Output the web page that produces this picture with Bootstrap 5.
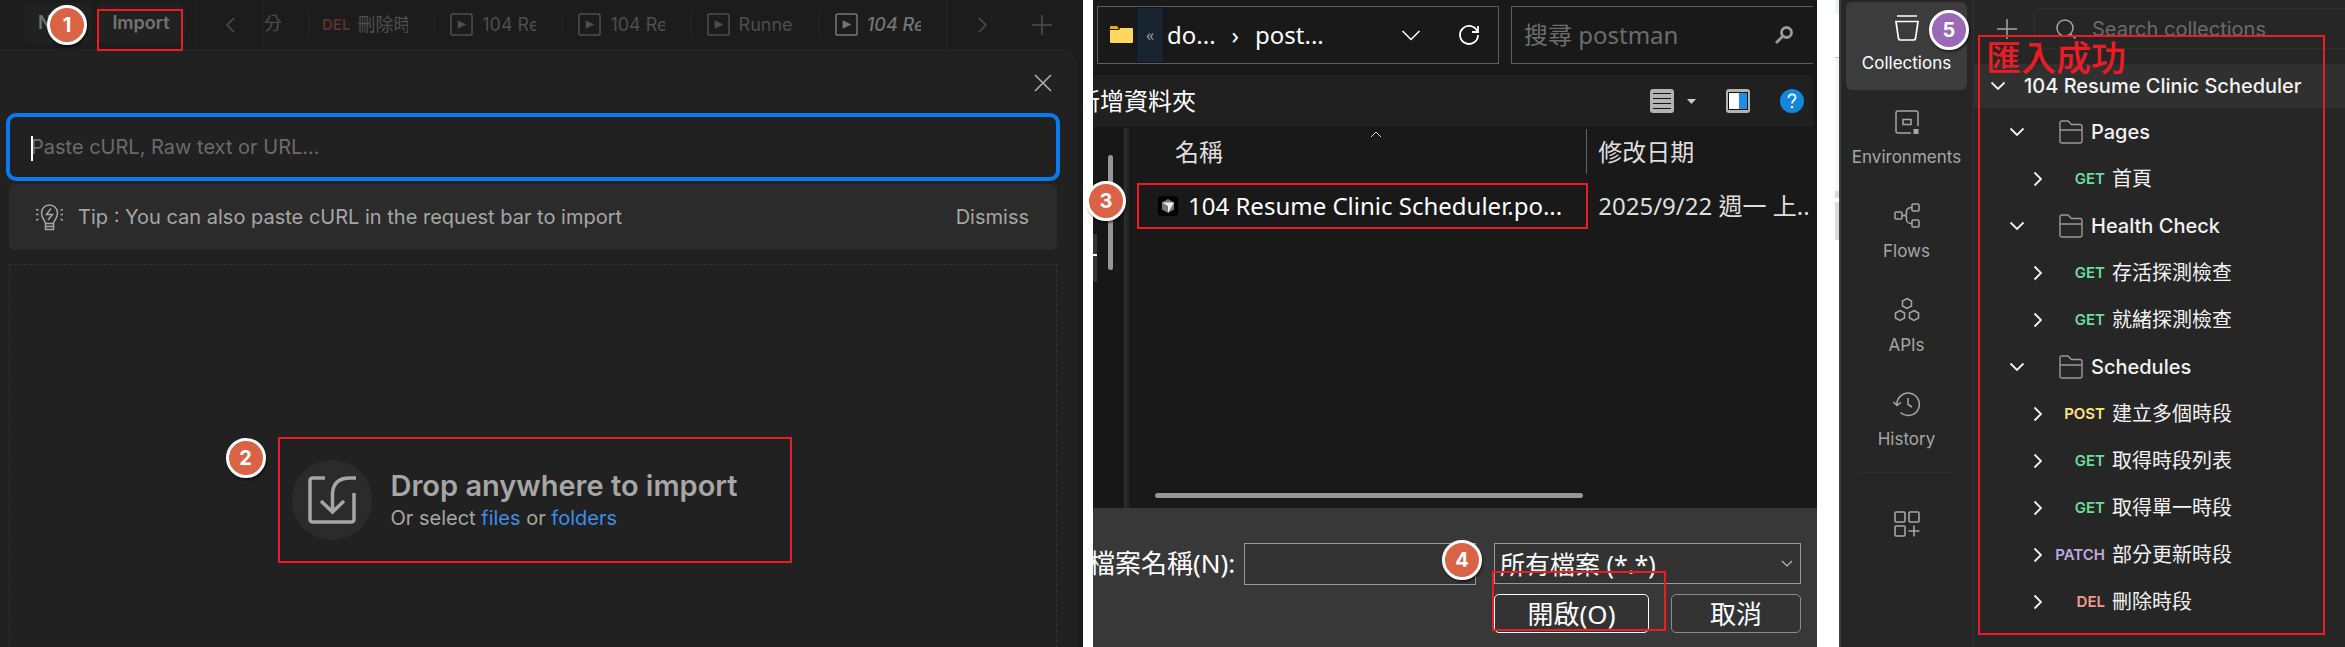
<!DOCTYPE html>
<html lang="zh-Hant">
<head>
<meta charset="utf-8">
<meta name="viewport" content="width=device-width, initial-scale=1">
<title>Import a collection</title>
<link href="https://cdn.jsdelivr.net/npm/bootstrap@5.3.0/dist/css/bootstrap.min.css" rel="stylesheet">
<style>
  body { font-family: Inter, "Noto Sans CJK TC", sans-serif; background: #fff; font-size: 20px; line-height: 28px; }
  svg { display: block; flex: none; fill: none; stroke: currentColor; }
  svg.flat { stroke: none; }
  button, input, select { font: inherit; color: inherit; }
  button { background: none; border: 0; padding: 0; }
  .stage { min-height: 100vh; display: grid; grid-template-columns: minmax(0, 1083fr) 10px minmax(0, 724fr) 22px minmax(0, 506fr); }

  /* step markers and highlight frames */
  .step { position: absolute; z-index: 5; width: 40px; height: 40px; border: 3px solid #fff; border-radius: 50%; background: #d96344; color: #fff; font-family: Inter, sans-serif; font-size: 20px; font-weight: 700; line-height: 34px; text-align: center; box-shadow: 1px 2px 2px rgba(0,0,0,.5); }
  .step.done { background: #9a69b9; }
  .frame { position: absolute; z-index: 4; border: 2px solid #ed1c24; pointer-events: none; }

  /* import dialog */
  .importer { background: #1c1c1c; color: #a6a6a6; }
  .topbar { height: 49px; color: #4e4e4e; font-size: 18px; }
  .topbar > * { flex: none; }
  .pill { height: 40px; margin-top: 3px; border-radius: 6px; background: #212121; color: #737373; font-weight: 600; }
  .pill.new { width: 68px; margin-left: 24px; text-align: left; padding-left: 14px; }
  .pill.imp { width: 88px; margin-left: 5px; }
  .back { width: 68px; margin-left: 11px; border-left: 1px solid #242424; border-right: 1px solid #242424; }
  .topbar .tabs { flex: 1 1 0; min-width: 0; border-right: 1px solid #262626; }
  .clipped { width: 44px; padding-top: 10px; flex: none; }
  .clipped span { width: 18px; }
  .clipped i { font-style: normal; margin-left: -18px; }
  .tab { flex: 1 1 0; min-width: 0; height: 49px; padding: 0 26px 0 16px; gap: 9px; position: relative; }
  .tab.request { padding-left: 14px; gap: 7px; }
  .tab::before { content: ""; position: absolute; left: 0; top: 11px; height: 27px; width: 1px; background: #262626; }
  .tab span { overflow: hidden; white-space: nowrap; }
  .tab b { color: #5a332c; font-weight: 600; font-size: 15px; }
  .tab.current { color: #757575; font-weight: 500; font-style: italic; }
  .tabs-end { width: 135px; padding: 0 31px 0 30px; }
  .dialog { background: #212121; border-top-right-radius: 14px; margin-right: 6px; padding: 25px 20px 0 9px; }
  .closer { margin: 0 5px 0 auto; color: #b0b0b0; }
  .curl { margin: 21px -3px 0; height: 68px; border: 4px solid #097bed; border-radius: 10px; background: #212121; padding: 0 21px; width: calc(100% + 6px); color: #fff; }
  .curl::placeholder { color: #6b6b6b; opacity: 1; }
  .caret { position: absolute; left: 22px; top: 44px; width: 2px; height: 25px; background: #fff; }
  .tip { margin-top: 3px; height: 66px; border-radius: 6px; background: #2b2b2b; padding: 0 28px 0 27px; gap: 15px; }
  .drop { margin-top: 14px; border: 1px dashed #333; border-bottom: 0; padding: 87px 0 0 3px; }
  .drop-inner { position: relative; width: 514px; height: 126px; padding-left: 14px; gap: 19px; }
  .drop-icon { width: 80px; height: 80px; border-radius: 50%; background: #2b2b2b; }
  .drop h1 { font-size: 29px; line-height: 36px; font-weight: 600; margin: 0; }
  .drop a { color: #3b8eea; text-decoration: none; }

  /* file picker */
  .picker { background: #191919; color: #fff; font-family: "Noto Sans", "Noto Sans CJK TC", sans-serif; font-size: 24px; line-height: 32px; }
  .paths { padding: 6px 4px 11px; gap: 12px; display: grid; grid-template-columns: 402fr 302fr; }
  .address { height: 58px; border: 1px solid #5c5c5c; padding: 0 18px 0 12px; }
  .crumbs { width: 28px; height: 56px; background: #182530; border: 1px solid #0d161e; color: #999; font-size: 16px; margin: 0 3px; }
  .refresh { margin-left: 38px; }
  .finder { height: 58px; border: 1px solid #5c5c5c; border-right: 0; padding: 0 20px 0 12px; }
  .finder input { background: none; border: 0; padding: 0; min-width: 0; width: 100%; }
  .finder input::placeholder { color: #6d6d6d; opacity: 1; }
  .finder svg { color: #999; }
  .tools { height: 53px; margin-right: 4px; background: #202020; border-bottom: 1px solid #161616; padding-right: 9px; gap: 30px; }
  .tools .views { gap: 13px; }
  .tools .cut { margin-left: -17px; }
  .side { width: 31px; flex: none; background: #171717; position: relative; }
  .thumb { position: absolute; left: 15px; top: 27px; width: 5px; height: 115px; border-radius: 3px; background: #969696; }
  .stub { position: absolute; left: 0; top: 106px; width: 4px; height: 48px; background: #333; }
  .stub::after { content: ""; display: block; margin-top: 20px; height: 2px; background: #fff; }
  .split { width: 5px; flex: none; background: #252525; border-left: 2px solid #2e2e2e; }
  .listing { min-width: 0; }
  .files { table-layout: fixed; width: 100%; }
  .files th { font-weight: 400; color: #dedede; height: 47px; padding: 0 0 0 11px; position: relative; white-space: nowrap; }
  .files th:first-child { padding-left: 46px; width: 67%; }
  .files th:first-child::after { content: ""; position: absolute; right: 0; top: 1px; height: 45px; width: 1px; background: #5f5f5f; }
  .files td { height: 62px; padding: 0 0 0 11px; position: relative; white-space: nowrap; color: #dedede; }
  .files td:first-child { padding-left: 29px; color: #fff; }
  .files td div { gap: 10px; }
  .sort { position: absolute; left: 241px; top: 3px; }
  .slide { height: 15px; padding-left: 26px; }
  .slide div { height: 5px; width: 65%; border-radius: 3px; background: #969696; }
  .confirm { background: #383838; height: 139px; font-size: 26px; padding: 35px 16px 0 0; gap: 18px; }
  .confirm label { width: 151px; flex: none; white-space: nowrap; overflow: hidden; }
  .confirm .cut { margin-left: -4px; }
  .fname { height: 42px; min-width: 0; border: 1px solid #999; background: #333; padding: 0 8px; width: 100%; }
  .kinds { width: 307px; flex: none; }
  .kinds select { appearance: none; width: 100%; height: 41px; border: 1px solid #999; border-radius: 0; background: #333; padding: 0 5px; font-size: 25px; }
  .kinds .arrow { position: absolute; right: 8px; top: 17px; color: #bbb; }
  .act { height: 39px; margin-top: 10px; border: 1px solid #8c8c8c; border-radius: 5px; background: #333; line-height: 36px; }
  .act.open { width: 155px; border-color: #fff; }
  .act.cancel { width: 130px; }

  /* collections sidebar */
  .edge { padding-left: 18px; }
  .edge div { height: 240px; background: linear-gradient(#eef1f5 0 14px, #fff 14px 57px, #c4c4c4 57px 58px, #f7f7f8 58px 191px, #d6dce6 191px 198px, #fff 198px 202px, #dadbe2 202px 240px); }
  .collections { background: #262626; color: #f2f2f2; border-left: 2px solid #3d3d3d; }
  .rail { width: 133px; flex: none; border-right: 1px solid #333; padding: 2px 6px 0 5px; color: #a6a6a6; font-size: 17px; }
  .rail a { height: 88px; flex: none; margin-bottom: 6px; border-radius: 6px; color: inherit; text-decoration: none; padding-top: 13px; gap: 10px; line-height: 24px; }
  .rail a.active { background: #3c3c3c; color: #fff; }
  .rail hr { margin: 0 14px 38px 13px; border-color: #4a4a4a; }
  .query { height: 64px; padding: 8px 0 15px 23px; gap: 17px; color: #a6a6a6; }
  .query .box { border: 1px solid #303030; border-right: 0; border-radius: 5px 0 0 5px; padding-left: 21px; gap: 16px; height: 41px; }
  .query input { background: none; border: 0; padding: 0; width: 100%; min-width: 0; }
  .query input::placeholder { color: #6b6b6b; opacity: 1; }
  .tree { font-weight: 500; }
  .tree li { height: 47px; }
  .tree li.root { height: 44px; background: #303030; padding-left: 16px; gap: 18px; }
  .tree li.group { padding-left: 35px; }
  .tree .dir { margin: 0 8px 0 34px; color: #999; }
  .tree li.call { padding-left: 56px; font-weight: 400; }
  .verb { width: 59px; text-align: right; font-size: 15px; font-weight: 600; margin-right: 7px; flex: none; }
  .get { color: #6bdd9a; } .post { color: #ffe47e; } .patch { color: #c0a8e1; } .del { color: #f79a8e; }
  .notice { position: absolute; z-index: 4; left: 12px; top: 38px; color: #ed1c24; font-size: 35px; line-height: 40px; font-weight: 500; white-space: nowrap; }
</style>
</head>
<body>
<svg width="0" height="0" class="position-absolute" aria-hidden="true">
  <defs>
    <symbol id="play" viewBox="0 0 24 24"><rect x="1" y="1" width="22" height="22" rx="2" stroke-width="1.6"/><path d="M8 7.500l9 4.500-9 4.500z" fill="currentColor" stroke="none"/></symbol>
    <symbol id="down" viewBox="0 0 16 16"><path d="M1.500 4.500L8 11l6.500-6.500" stroke-width="1.800"/></symbol>
    <symbol id="right" viewBox="0 0 16 16"><path d="M4.500 1.500L11 8l-6.500 6.500" stroke-width="1.800"/></symbol>
    <symbol id="plus" viewBox="0 0 20 20"><path d="M10 0v20M0 10h20" stroke-width="1.500"/></symbol>
    <symbol id="folder" viewBox="0 0 24 24"><path d="M1 3q0-2 2-2h6l3.500 3.500H21q2 0 2 2V21q0 2-2 2H3q-2 0-2-2zM1 10h22" stroke-width="1.400"/></symbol>
  </defs>
</svg>
<main class="stage overflow-hidden">

  <section class="importer d-flex flex-column overflow-hidden" aria-label="Import">
    <div class="topbar d-flex position-relative">
      <button class="pill new" type="button">New</button>
      <span class="step" style="left:47px;top:5px">1</span>
      <div class="position-relative">
        <button class="pill imp" type="button">Import</button>
        <span class="frame" style="left:5px;top:9px;width:86px;height:42px"></span>
      </div>
      <button class="back d-flex align-items-center justify-content-center" type="button" aria-label="Back"><svg width="9" height="16" viewBox="0 0 9 16"><path d="M8 1L1 8l7 7" stroke-width="1.500"/></svg></button>
      <div class="tabs d-flex">
        <div class="clipped"><span class="d-block overflow-hidden text-nowrap"><i>部分</i></span></div>
        <div class="tab request d-flex align-items-center"><b>DEL</b><span>刪除時段</span></div>
        <div class="tab d-flex align-items-center"><svg width="23" height="23"><use href="#play"/></svg><span>104 Resume</span></div>
        <div class="tab d-flex align-items-center"><svg width="23" height="23"><use href="#play"/></svg><span>104 Resume</span></div>
        <div class="tab d-flex align-items-center"><svg width="23" height="23"><use href="#play"/></svg><span>Runner</span></div>
        <div class="tab current d-flex align-items-center"><svg width="23" height="23"><use href="#play"/></svg><span>104 Resume</span></div>
      </div>
      <div class="tabs-end d-flex align-items-center justify-content-between">
        <svg width="9" height="16" viewBox="0 0 9 16"><path d="M1 1l7 7-7 7" stroke-width="1.500"/></svg>
        <svg width="20" height="20"><use href="#plus"/></svg>
      </div>
    </div>
    <div class="dialog flex-fill d-flex flex-column">
      <button class="closer" type="button" aria-label="Close"><svg width="18" height="18" viewBox="0 0 18 18"><path d="M1 1l16 16M17 1L1 17" stroke-width="1.600"/></svg></button>
      <div class="position-relative">
        <input class="curl" type="text" placeholder="Paste cURL, Raw text or URL..." aria-label="Paste cURL, Raw text or URL">
        <span class="caret"></span>
      </div>
      <div class="tip d-flex align-items-center">
        <svg width="27" height="28" viewBox="0 0 27 28" stroke-width="1.500"><path d="M9.500 20.500c0-3-4-4.500-4-10.500a8 8 0 0116 0c0 6-4 7.500-4 10.500zM9.500 20.500v6h8v-6M9.500 23.500h8"/><path d="M15 5.500l-4.500 6h6L12 17M0 6.500l2.500.800M0 11.500h2.500M0 17l2.500-.800M27 6.500l-2.500.800M27 11.500h-2.500M27 17l-2.500-.800"/></svg>
        <span>Tip : You can also paste cURL in the request bar to import</span>
        <button class="ms-auto" type="button">Dismiss</button>
      </div>
      <div class="drop flex-fill d-flex flex-column align-items-center justify-content-center">
        <div class="drop-inner d-flex align-items-center">
          <span class="frame" style="inset:0"></span>
          <span class="step" style="left:-52px;top:1px">2</span>
          <div class="drop-icon d-flex align-items-center justify-content-center"><svg width="48" height="48" viewBox="0 0 48 48" stroke-width="3.500"><path d="M17 2H5q-3 0-3 3v38q0 3 3 3h38q3 0 3-3V17" stroke-linejoin="round"/><path d="M48 2h-6Q25 2 24.500 18v17M13 25l11.500 11L36 25"/></svg></div>
          <div>
            <h1>Drop anywhere to import</h1>
            <div>Or select <a href="#">files</a> or <a href="#">folders</a></div>
          </div>
        </div>
      </div>
    </div>
  </section>

  <div></div>

  <section class="picker d-flex flex-column position-relative" aria-label="File picker">
    <div class="paths">
      <div class="address d-flex align-items-center">
        <svg class="flat" width="23" height="18" viewBox="0 0 23 18"><path d="M0 1q0-1 1-1h6l2 3H0z" fill="#f9a602"/><path d="M0 4h9l1.500-2H22q1 0 1 1v13q0 1-1 1H1q-1 0-1-1z" fill="#ffd75e"/></svg>
        <button class="crumbs" type="button">«</button>
        <span>do...</span><span class="mx-3">›</span><span>post...</span>
        <svg class="ms-auto" width="18" height="18" viewBox="0 0 16 16"><path d="M.500 4.500L8 12l7.500-7.500" stroke-width="1.300"/></svg>
        <svg class="refresh" width="22" height="22" viewBox="0 0 22 22" stroke-width="1.800"><path d="M19.500 8A9 9 0 1020 11M20 2v6h-6"/></svg>
      </div>
      <div class="finder d-flex align-items-center">
        <input type="text" placeholder="搜尋 postman" aria-label="搜尋 postman">
        <svg width="18" height="18" viewBox="0 0 18 18" stroke-width="2.800"><circle cx="11.500" cy="6.500" r="5"/><path d="M8 10l-7 7"/></svg>
      </div>
    </div>
    <div class="tools d-flex align-items-center">
      <div class="overflow-hidden me-auto"><span class="cut d-inline-block">新增資料夾</span></div>
      <div class="views d-flex align-items-center">
        <svg class="flat" width="24" height="24" viewBox="0 0 24 24"><rect width="24" height="24" rx="3" fill="#b3b3b3"/><path d="M3 4.500h18M3 9.500h18M3 14.500h18M3 19.500h18" stroke="#111"/></svg>
        <svg class="flat" width="9" height="5" viewBox="0 0 9 5"><path d="M0 0h9L4.500 5z" fill="#ccc"/></svg>
      </div>
      <svg class="flat" width="24" height="24" viewBox="0 0 24 24"><rect width="24" height="24" rx="3" fill="#b3b3b3"/><rect x="2.500" y="3.500" width="19" height="17" fill="#fff" stroke="#111"/><path d="M13 4h8v16h-8z" fill="#1a8fe3"/></svg>
      <svg class="flat" width="24" height="24" viewBox="0 0 24 24"><circle cx="12" cy="12" r="12" fill="#1188dd"/><path d="M8.500 9c0-5 7-4.500 7-.500 0 3-3.500 3-3.500 6" fill="none" stroke="#fff" stroke-width="1.800"/><circle cx="12" cy="18" r="1.300" fill="#fff"/></svg>
    </div>
    <div class="d-flex flex-fill">
      <div class="side">
        <span class="thumb"></span><span class="stub"></span>
        <span class="step" style="left:-7px;top:53px">3</span>
      </div>
      <div class="split"></div>
      <div class="listing flex-fill d-flex flex-column pe-1">
        <table class="files">
          <thead><tr>
            <th scope="col">名稱<svg class="sort" width="12" height="7" viewBox="0 0 12 7"><path d="M1 6l5-5 5 5"/></svg></th>
            <th scope="col">修改日期</th>
          </tr></thead>
          <tbody><tr>
            <td><span class="frame" style="left:8px;top:8px;right:-1px;height:46px"></span>
              <div class="d-flex align-items-center"><svg class="flat" width="20" height="20" viewBox="0 0 20 20"><rect width="20" height="20" rx="4" fill="#000"/><path d="M10 3l6 3.500v7L10 17l-6-3.500v-7z" fill="#777"/><path d="M4 6.500h12L10 17v-7z" fill="#eee"/></svg><span>104 Resume Clinic Scheduler.po...</span></div></td>
            <td>2025/9/22 週一 上..</td>
          </tr></tbody>
        </table>
        <div class="slide mt-auto"><div></div></div>
      </div>
    </div>
    <div class="confirm d-flex">
      <div class="d-flex flex-fill align-items-start position-relative">
        <label for="fname"><span class="cut d-inline-block mt-1">檔案名稱(N):</span></label>
        <input class="fname" id="fname" type="text">
        <span class="step" style="right:-6px;top:-3px">4</span>
      </div>
      <div class="kinds position-relative">
        <select aria-label="檔案類型"><option>所有檔案 (*.*)</option></select>
        <svg class="arrow" width="12" height="8" viewBox="0 0 12 8"><path d="M1 1l5 5 5-5" stroke-width="1.200"/></svg>
        <div class="d-flex justify-content-between">
          <button class="act open" type="button">開啟(O)</button>
          <button class="act cancel" type="button">取消</button>
        </div>
        <span class="frame" style="left:-2px;top:28px;width:174px;height:60px"></span>
      </div>
    </div>
  </section>

  <div class="edge"><div></div></div>

  <section class="collections d-flex" aria-label="Collections">
    <nav class="rail d-flex flex-column position-relative">
      <a class="active d-flex flex-column align-items-center" href="#"><svg width="24" height="26" viewBox="0 0 24 26" stroke-width="1.700"><path d="M2 1h20M1 6.500h22l-2.500 17q-.300 1.500-2 1.500h-13q-1.700 0-2-1.500z"/></svg>Collections</a>
      <a class="d-flex flex-column align-items-center" href="#"><svg width="24" height="26" viewBox="0 0 24 26" stroke-width="1.500"><path d="M16 24H3q-2 0-2-2V4q0-2 2-2h18q2 0 2 2v13"/><path d="M8 10.500h8v5H8z"/><path d="M18.500 20h5v5h-5z" fill="currentColor" stroke="none"/></svg>Environments</a>
      <a class="d-flex flex-column align-items-center" href="#"><svg width="26" height="26" viewBox="0 0 26 26" stroke-width="1.500"><rect x="1" y="9" width="7" height="7" rx="1"/><rect x="18" y="1" width="7" height="7" rx="1"/><rect x="18" y="17" width="7" height="7" rx="1"/><path d="M8 12.500h2.500q2 0 2-2.500V8q.500-3.500 5.500-3.500M10.500 12.500q2 0 2 2.500v2q.500 3.500 5.500 3.500"/></svg>Flows</a>
      <a class="d-flex flex-column align-items-center" href="#"><svg width="26" height="26" viewBox="0 0 26 26" stroke-width="1.500"><path d="M13 1.500l4.500 2.500v5L13 11.500 8.500 9V4zM6 13.500l4.500 2.500v5L6 23.500 1.500 21v-5zM20 13.500l4.500 2.500v5L20 23.500 15.500 21v-5z"/></svg>APIs</a>
      <a class="d-flex flex-column align-items-center" href="#"><svg width="27" height="26" viewBox="0 0 27 26" stroke-width="1.500"><path d="M4 14.500a11.200 11.200 0 113.500 7M.500 11l3.500 3.500L8 11.500M15 7v6.500l4 2.500"/></svg>History</a>
      <hr>
      <svg class="mx-auto" width="26" height="26" viewBox="0 0 26 26" stroke-width="1.600"><rect x="1" y="1" width="10" height="10" rx="1"/><rect x="15" y="1" width="10" height="10" rx="1"/><rect x="1" y="15" width="10" height="10" rx="1"/><path d="M20 14.500v11M14.500 20h11"/></svg>
      <span class="step done" style="right:4px;top:10px">5</span>
    </nav>
    <div class="flex-fill position-relative">
      <div class="query d-flex align-items-center">
        <svg width="20" height="20"><use href="#plus"/></svg>
        <div class="box d-flex flex-fill align-items-center">
          <svg width="20" height="20" viewBox="0 0 20 20" stroke-width="1.500"><circle cx="9" cy="9" r="8"/><path d="M14.500 15l5 4.500"/></svg>
          <input type="text" placeholder="Search collections" aria-label="Search collections">
        </div>
      </div>
      <span class="frame" style="left:4px;top:35px;right:20px;height:600px"></span>
      <span class="notice">匯入成功</span>
      <ul class="tree list-unstyled mb-0">
        <li class="root d-flex align-items-center"><svg width="16" height="16"><use href="#down"/></svg><span>104 Resume Clinic Scheduler</span></li>
        <li class="group d-flex align-items-center"><svg width="16" height="16"><use href="#down"/></svg><svg class="dir" width="24" height="24"><use href="#folder"/></svg><span>Pages</span></li>
        <li class="call d-flex align-items-center"><svg width="16" height="16"><use href="#right"/></svg><span class="verb get">GET</span>首頁</li>
        <li class="group d-flex align-items-center"><svg width="16" height="16"><use href="#down"/></svg><svg class="dir" width="24" height="24"><use href="#folder"/></svg><span>Health Check</span></li>
        <li class="call d-flex align-items-center"><svg width="16" height="16"><use href="#right"/></svg><span class="verb get">GET</span>存活探測檢查</li>
        <li class="call d-flex align-items-center"><svg width="16" height="16"><use href="#right"/></svg><span class="verb get">GET</span>就緒探測檢查</li>
        <li class="group d-flex align-items-center"><svg width="16" height="16"><use href="#down"/></svg><svg class="dir" width="24" height="24"><use href="#folder"/></svg><span>Schedules</span></li>
        <li class="call d-flex align-items-center"><svg width="16" height="16"><use href="#right"/></svg><span class="verb post">POST</span>建立多個時段</li>
        <li class="call d-flex align-items-center"><svg width="16" height="16"><use href="#right"/></svg><span class="verb get">GET</span>取得時段列表</li>
        <li class="call d-flex align-items-center"><svg width="16" height="16"><use href="#right"/></svg><span class="verb get">GET</span>取得單一時段</li>
        <li class="call d-flex align-items-center"><svg width="16" height="16"><use href="#right"/></svg><span class="verb patch">PATCH</span>部分更新時段</li>
        <li class="call d-flex align-items-center"><svg width="16" height="16"><use href="#right"/></svg><span class="verb del">DEL</span>刪除時段</li>
      </ul>
    </div>
  </section>
</main>
<script src="https://cdn.jsdelivr.net/npm/bootstrap@5.3.0/dist/js/bootstrap.bundle.min.js"></script>
</body>
</html>
